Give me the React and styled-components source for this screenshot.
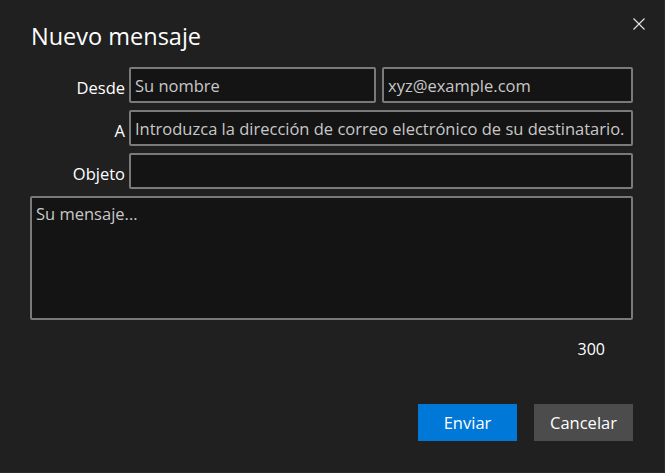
import React from 'react';
import styled, { createGlobalStyle } from 'styled-components';

const Global = createGlobalStyle`
    html, body {
        margin: 0;
        padding: 0;
        background: #202020;
    }
    body {
        font-family: "Open Sans", "Noto Sans", sans-serif;
    }
`;

function App() {
    return (
        <>
            <Global />
            <Dialog>
                <Header>
                    <Title>Nuevo mensaje</Title>
                    <Close aria-label="Cerrar">
                        <svg width="12" height="12" viewBox="0 0 12 12">
                            <path d="M0.5 0.5 L11.5 11.5 M11.5 0.5 L0.5 11.5" stroke="#e6e6e6" strokeWidth="1.1" fill="none" />
                        </svg>
                    </Close>
                </Header>
                <Form>
                    <Label>Desde</Label>
                    <Pair>
                        <Field placeholder="Su nombre" />
                        <Field placeholder="xyz@example.com" />
                    </Pair>
                    <Label>A</Label>
                    <Field placeholder="Introduzca la dirección de correo electrónico de su destinatario." />
                    <Label>Objeto</Label>
                    <Field />
                    <Message placeholder="Su mensaje..." />
                </Form>
                <Counter>300</Counter>
                <Actions>
                    <Button primary>Enviar</Button>
                    <Button>Cancelar</Button>
                </Actions>
            </Dialog>
        </>
    );
}

const Dialog = styled.div`
    box-sizing: border-box;
    width: 665px;
    height: 473px;
    padding: 0 31px 0 30px;
    display: flex;
    flex-direction: column;
    background: #202020;
    color: #fff;
    border-right: 1px solid #2a2a2a;
    border-bottom: 1px solid #2a2a2a;
`;

const Header = styled.div`
    position: relative;
    height: 67px;
`;

const Title = styled.h1`
    margin: 0;
    padding-top: 19px;
    padding-left: 1px;
    font-size: 23.5px;
    font-weight: 400;
    line-height: 34px;
    color: #fff;
`;

const Close = styled.button`
    position: absolute;
    top: 18px;
    right: -12px;
    width: 12px;
    height: 12px;
    padding: 0;
    border: 0;
    background: none;
    display: flex;
`;

const Form = styled.div`
    display: grid;
    grid-template-columns: 95px 1fr;
    column-gap: 4px;
    row-gap: 7px;
    align-items: center;
`;

const Label = styled.label`
    text-align: right;
    font-size: 16.5px;
    color: #fff;
    padding-top: 4px;
`;

const Pair = styled.div`
    display: grid;
    grid-template-columns: 247px 1fr;
    gap: 6px;
`;

const Field = styled.input`
    box-sizing: border-box;
    width: 100%;
    height: 36px;
    margin: 0;
    padding: 0 4px;
    background: #141414;
    border: 2px solid #7a7a7a;
    border-radius: 2px;
    font-family: "Open Sans", "Noto Sans", sans-serif;
    font-size: 16.5px;
    letter-spacing: 0;
    color: #fff;
    outline: none;

    &::placeholder {
        color: #c8c8c8;
        opacity: 1;
    }
`;

const Message = styled.textarea`
    grid-column: 1 / -1;
    box-sizing: border-box;
    width: 100%;
    height: 124px;
    margin: 0;
    padding: 4px 4px;
    background: #141414;
    border: 2px solid #7a7a7a;
    border-radius: 2px;
    font-family: "Open Sans", "Noto Sans", sans-serif;
    font-size: 16.5px;
    color: #fff;
    resize: none;
    outline: none;

    &::placeholder {
        color: #c8c8c8;
        opacity: 1;
    }
`;

const Counter = styled.div`
    align-self: flex-end;
    margin: 17px 28px 0 0;
    font-size: 16px;
    line-height: 24px;
    color: #fff;
`;

const Actions = styled.div`
    display: flex;
    justify-content: flex-end;
    gap: 17px;
    margin-top: 43px;
`;

const Button = styled.button`
    width: 99px;
    height: 37px;
    padding: 0;
    border: 0;
    border-radius: 0;
    background: ${props => props.primary ? '#0078d7' : '#4c4c4c'};
    color: #fff;
    font-family: "Open Sans", "Noto Sans", sans-serif;
    font-size: 16.5px;
`;

export default App;
